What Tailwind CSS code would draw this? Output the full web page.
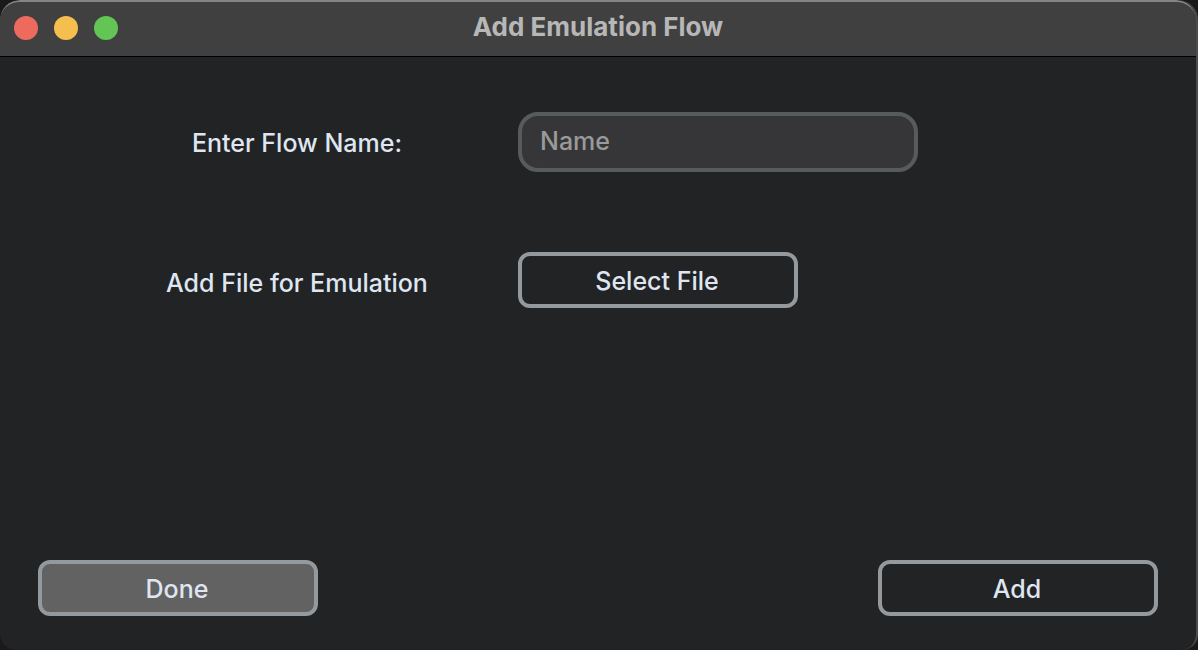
<!DOCTYPE html>
<html lang="en">
<head>
<meta charset="utf-8">
<title>Add Emulation Flow</title>
<script src="https://cdn.jsdelivr.net/npm/@tailwindcss/browser@4"></script>
</head>
<body class="bg-[#1a1a1b] font-['Inter','Liberation_Sans',sans-serif] text-[25px] leading-8 font-medium text-[#dfe6f2]">
<div class="flex min-h-screen flex-col overflow-hidden rounded-t-[20px] rounded-b-2xl border-r-2 border-r-[#4b4c4d] bg-[#222325]">
  <header class="grid h-[57px] grid-cols-[1fr_auto_1fr] items-center rounded-t-[20px] border-t-2 border-b border-t-[#858585] border-b-black bg-[#404040] px-3.5">
    <div class="flex gap-4 pb-0.5">
      <button aria-label="Close" class="size-6 rounded-full bg-[#ed6a5e]"></button>
      <button aria-label="Minimize" class="size-6 rounded-full bg-[#f5bf4f]"></button>
      <button aria-label="Zoom" class="size-6 rounded-full bg-[#62c554]"></button>
    </div>
    <h1 class="pb-1 text-[26px] font-bold text-[#b7b7b7]">Add Emulation Flow</h1>
  </header>
  <main class="flex flex-1 flex-col justify-between pt-[55px] pb-[34px]">
    <form class="grid grid-cols-[442px_1fr] items-center gap-y-20 pl-[76px]">
      <label for="flow-name" class="pt-0.5 text-center">Enter Flow Name:</label>
      <input id="flow-name" type="text" placeholder="Name" class="h-[60px] w-[400px] rounded-[20px] border-4 border-[#585b5d] bg-[#363638] px-[18px] pb-0.5 outline-none placeholder:text-[#9a9a9b]">
      <label for="flow-file" class="pt-1.5 text-center">Add File for Emulation</label>
      <button id="flow-file" type="button" class="h-14 w-70 rounded-xl border-4 border-[#94999d] pt-0.5 pr-0.5">Select File</button>
    </form>
    <footer class="flex justify-between px-[38px]">
      <button type="button" class="h-14 w-70 rounded-xl border-4 border-[#94999d] bg-[#626262] pt-0.5 pr-0.5">Done</button>
      <button type="button" class="h-14 w-70 rounded-xl border-4 border-[#94999d] pt-0.5 pr-0.5">Add</button>
    </footer>
  </main>
</div>
</body>
</html>
